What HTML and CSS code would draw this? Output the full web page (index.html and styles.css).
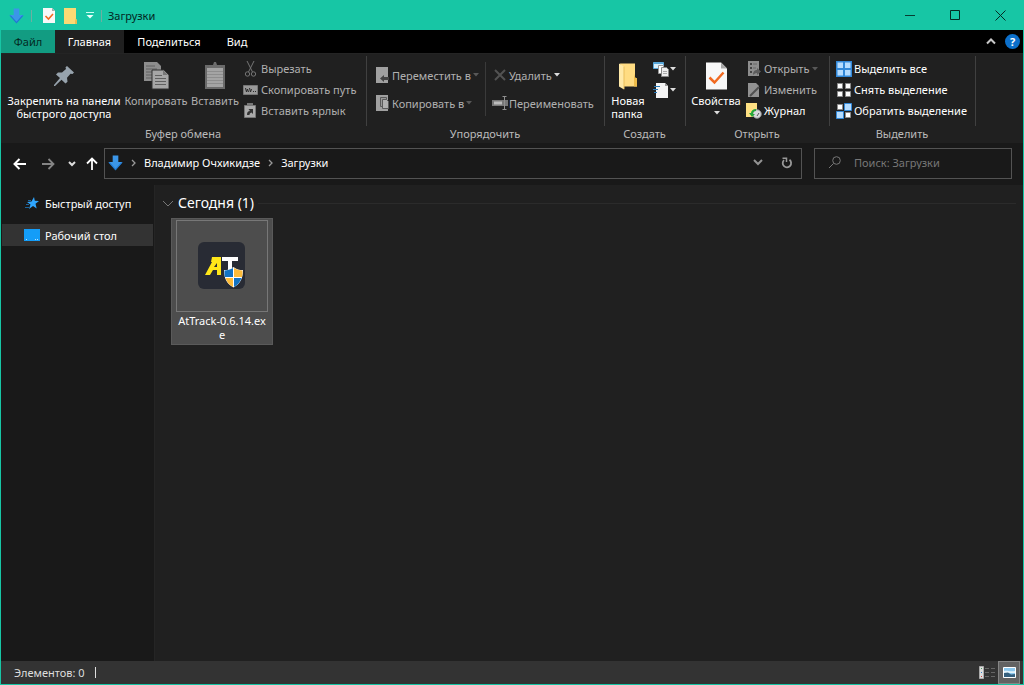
FILE: index.html
```html
<!DOCTYPE html>
<html lang="ru">
<head>
<meta charset="utf-8">
<title>Загрузки</title>
<link rel="stylesheet" href="styles.css">
</head>
<body>
<svg class="defs" width="0" height="0" aria-hidden="true">
  <defs>
    <symbol id="down-arrow" viewBox="0 0 16 16"><path d="M5 0h6v7h4.500L8 15.500.5 7H5z" fill="#3b96e8"/><path d="M.5 7.500L8 16l7.500-8.500h-1.500L8 14 2 7.500z" fill="#1f78d0"/></symbol>
    <symbol id="caret" viewBox="0 0 6 4"><path d="M0 0h6L3 3.500z" fill="currentColor"/></symbol>
    <symbol id="check-page" viewBox="0 0 21 27"><path d="M0 0h15l6 6v21H0z" fill="#f8f8f8"/><path d="M15 0v6h6z" fill="#a9a9a9"/><path d="M3.500 15l5 5 9-10" fill="none" stroke="#f26a21" stroke-width="2.500"/></symbol>
    <symbol id="folder" viewBox="0 0 18 27"><path d="M1 1h15v14l2 1v8H5z" fill="#ffdc82"/><path d="M16 11v4l2 1v8h-3v-9z" fill="#eebc4a"/><path d="M0 1l5 3v23l-5-3z" fill="#ffe9a8"/><path d="M5 4v23" stroke="#e9be5c"/></symbol>
  </defs>
</svg>
<div class="window">
  <header class="titlebar">
    <svg class="qa-arrow" width="15" height="16"><use href="#down-arrow"/></svg>
    <span class="qa-sep"></span>
    <button class="qa-btn" aria-label="Свойства"><svg width="12" height="15" viewBox="0 0 12 15"><path d="M0 0h9l3 3v12H0z" fill="#f8f8f8"/><path d="M9 0v3h3z" fill="#a9a9a9"/><path d="M2.500 8l3 3L10 6" fill="none" stroke="#f26a21" stroke-width="1.600"/></svg></button>
    <button class="qa-btn" aria-label="Новая папка"><svg width="13" height="16" viewBox="0 0 13 16"><path d="M0 0h12v11l1 1v4H0z" fill="#fbda74"/><path d="M12 10v1l1 1v4h-2v-3z" fill="#e9bd52"/></svg></button>
    <button class="qa-btn" aria-label="Настройка панели"><svg width="8" height="7" viewBox="0 0 8 7"><path d="M0 .5h8" stroke="#c9fff2"/><path d="M.5 3h7L4 6.500z" fill="#e8fffa"/></svg></button>
    <span class="qa-sep"></span>
    <h1 class="title">Загрузки</h1>
    <div class="caption">
      <button aria-label="Свернуть"><svg width="11" height="11" viewBox="0 0 11 11"><path d="M0 5.500h10" stroke="#073d32"/></svg></button>
      <button aria-label="Развернуть"><svg width="11" height="11" viewBox="0 0 11 11"><path d="M.5.5h9v9h-9z" fill="none" stroke="#042a22"/></svg></button>
      <button aria-label="Закрыть"><svg width="11" height="11" viewBox="0 0 11 11"><path d="M.5.5l10 10M10.500.5l-10 10" stroke="#042a22"/></svg></button>
    </div>
  </header>

  <nav class="tabs">
    <button class="tab file">Файл</button>
    <button class="tab active">Главная</button>
    <button class="tab">Поделиться</button>
    <button class="tab view">Вид</button>
    <span class="tab-tools">
      <button aria-label="Свернуть ленту"><svg width="10" height="7" viewBox="0 0 10 7"><path d="M1 5.500l4-4 4 4" fill="none" stroke="#c8c8c8" stroke-width="2"/></svg></button>
      <button class="help" aria-label="Справка">?</button>
    </span>
  </nav>

  <section class="ribbon">
    <div class="group clipboard">
      <div class="body">
        <button class="big pin bright"><svg width="22" height="28" viewBox="0 0 22 28"><path d="M14 4l7 6.500-1.500 1.500-2-.3-3.500 4 .5 4-2 1.800-4-3.700L2 24H1v-1l6-7-4-3.500 2-2h4L13 7l-.5-1.700z" fill="#97a3ad"/></svg><span>Закрепить на панели<br>быстрого доступа</span></button>
        <button class="big copy dim"><svg width="25" height="28" viewBox="0 0 25 28"><path d="M0 0h13l4 4v15H0z" fill="#8d8d8d"/><path d="M2 4h9M2 7h11M2 10h6M2 13h6M2 16h6" stroke="#606060"/><path d="M8 8h12l5 5v14H8z" fill="#a6a6a6" stroke="#303030"/><path d="M19 8v5h5z" fill="#777"/><path d="M11 13.500h7M11 16.500h11M11 19.500h11M11 22.500h11" stroke="#606060"/></svg><span>Копировать</span></button>
        <button class="big paste dim"><svg width="20" height="28" viewBox="0 0 20 28"><path d="M0 3h20v24H0z" fill="#6a6a6a"/><path d="M2 6h16v19H2z" fill="#a4a4a4"/><path d="M4 6V3h4l1-3h2l1 3h4v3z" fill="#6d6d6d"/><path d="M2 9.500h16M2 12.500h16M2 15.500h16M2 18.500h16M2 21.500h16" stroke="#8d8d8d"/></svg><span>Вставить</span></button>
        <div class="list">
          <button class="cmd dim"><svg width="16" height="16" viewBox="0 0 16 16" fill="none" stroke="#747474"><path d="M4 0l5.500 11M11 0L5.500 11"/><circle cx="4.500" cy="13" r="2.200"/><circle cx="10.500" cy="13" r="2.200"/></svg><span>Вырезать</span></button>
          <button class="cmd dim"><svg width="16" height="16" viewBox="0 0 16 16"><path d="M.5 3.500h14v9H.5z" fill="#999" stroke="#777"/><path d="M2.500 6l1 4 1-3 1 3M6.500 6l1 4 1-3M10 9.500h1M12 9.500h1" stroke="#292929" fill="none"/></svg><span>Скопировать путь</span></button>
          <button class="cmd dim"><svg width="16" height="16" viewBox="0 0 16 16"><path d="M1.500 2.500h11v12h-11z" fill="#aaa" stroke="#777"/><path d="M4 0h6v3H4z" fill="#777"/><path d="M4 12c0-3 1-4 3-4L5.500 6H10v5L8.500 9.500C7 10 6.500 11 6.500 12z" fill="#333"/></svg><span>Вставить ярлык</span></button>
        </div>
      </div>
      <h2>Буфер обмена</h2>
    </div>

    <div class="group organize">
      <div class="body">
        <div class="list wide">
          <button class="cmd dim"><svg width="16" height="16" viewBox="0 0 16 16"><path d="M1 0h12v16H1z" fill="#a0a0a0"/><path d="M5 11.500L9 8v2h5v3H9v2z" fill="#444"/></svg><span>Переместить в</span><svg class="caret off" width="6" height="4"><use href="#caret"/></svg></button>
          <button class="cmd dim"><svg width="16" height="16" viewBox="0 0 16 16"><path d="M1 0h12v16H1z" fill="#a0a0a0"/><path d="M5.500 2.500h6v9h-6z" fill="#999" stroke="#5a5a5a"/><path d="M7.500 4.500h4l2 2v7h-6z" fill="#b0b0b0" stroke="#5a5a5a"/></svg><span>Копировать в</span><svg class="caret off" width="6" height="4"><use href="#caret"/></svg></button>
        </div>
        <div class="list wide split">
          <button class="cmd dim"><svg width="16" height="16" viewBox="0 0 16 16"><path d="M3 3l10 10M13 3L3 13" stroke="#525252" stroke-width="2"/></svg><span>Удалить</span><svg class="caret" width="6" height="4"><use href="#caret"/></svg></button>
          <button class="cmd dim"><svg width="16" height="16" viewBox="0 0 16 16"><path d="M0 5h16v6H0z" fill="#777"/><path d="M2 6.500h8v3H2z" fill="#bbb"/><path d="M12.500 2v12M10.500 1.500h4M10.500 14.500h4" stroke="#909090"/></svg><span>Переименовать</span></button>
        </div>
      </div>
      <h2>Упорядочить</h2>
    </div>

    <div class="group create">
      <div class="body">
        <button class="big new-folder bright"><svg width="18" height="28" viewBox="0 0 18 27"><use href="#folder"/></svg><span>Новая<br>папка</span></button>
        <div class="list icons">
          <button class="cmd" aria-label="Создать элемент"><svg width="16" height="16" viewBox="0 0 16 16"><path d="M.5 1.500h10v6H.5z" fill="#daf0fc" stroke="#58a6d9"/><path d="M1 2h9v1H1z" fill="#58a6d9"/><path d="M5.500 4.500h5v8h-5z" fill="#fff" stroke="#999"/><path d="M8.500 6.500h5l2 2v7h-7z" fill="#eee" stroke="#888"/><path d="M10 10.500h4M10 12.500h4" stroke="#aaa"/></svg><svg class="caret" width="6" height="4"><use href="#caret"/></svg></button>
          <button class="cmd" aria-label="Простой доступ"><svg width="16" height="16" viewBox="0 0 16 16"><path d="M3 1h9l3 3v12H3z" fill="#f4f4f4"/><path d="M12 1v3h3z" fill="#999"/><path d="M1 4.500h6M0 7.500h5M1 10.500h3" stroke="#2577b5"/></svg><svg class="caret" width="6" height="4"><use href="#caret"/></svg></button>
        </div>
      </div>
      <h2>Создать</h2>
    </div>

    <div class="group open">
      <div class="body">
        <button class="big props bright"><svg width="21" height="28"><use href="#check-page"/></svg><span>Свойства</span><svg class="caret" width="6" height="4"><use href="#caret"/></svg></button>
        <div class="list">
          <button class="cmd dim"><svg width="16" height="16" viewBox="0 0 16 16"><path d="M2 0h11v15H2z" fill="#8d8d8d"/><path d="M4 2h2v2H4zM4 6h2v2H4zM4 10h2v2H4z" fill="#444"/><path d="M7 3h4M7 7h3" stroke="#666"/><path d="M7 14c0-4 2-5 4-5V7l4 3.500-4 3.500v-2c-2 0-3 1-4 2z" fill="#5c5c5c"/></svg><span>Открыть</span><svg class="caret off" width="6" height="4"><use href="#caret"/></svg></button>
          <button class="cmd dim"><svg width="16" height="16" viewBox="0 0 16 16"><path d="M2 1h8l3 3v11H2z" fill="#929292"/><path d="M4 14L13 5" stroke="#505050" stroke-width="2"/></svg><span>Изменить</span></button>
          <button class="cmd bright"><svg width="16" height="16" viewBox="0 0 16 16"><path d="M0 0h11v14H0z" fill="#ffe083"/><circle cx="11" cy="11" r="4.300" fill="#d8dadd" stroke="#888"/><path d="M11 13l2-3" stroke="#555" fill="none"/><path d="M3 10h2c0-2 2-4 5-4v2c-2 0-3 1-3 3h2l-3 3z" fill="#25a83a"/></svg><span>Журнал</span></button>
        </div>
      </div>
      <h2>Открыть</h2>
    </div>

    <div class="group select">
      <div class="body">
        <div class="list">
          <button class="cmd bright"><svg width="16" height="16" viewBox="0 0 16 16"><path d="M0 0h16v16H0z" fill="#3288d8"/><path d="M1.500 1.500h5.500v5.500H1.500zM9 1.500h5.500v5.500H9zM1.500 9h5.500v5.500H1.500zM9 9h5.500v5.500H9z" fill="#b5dcff"/></svg><span>Выделить все</span></button>
          <button class="cmd bright"><svg width="16" height="16" viewBox="0 0 16 16"><path d="M1.500 1.500h5v5h-5zM9.500 1.500h5v5h-5zM1.500 9.500h5v5h-5zM9.500 9.500h5v5h-5z" fill="#fff" stroke="#8c8c8c"/></svg><span>Снять выделение</span></button>
          <button class="cmd bright"><svg width="16" height="16" viewBox="0 0 16 16"><path d="M1.500 1.500h5v5h-5zM9.500 9.500h5v5h-5z" fill="#fff" stroke="#8c8c8c"/><path d="M8.500.5h7v7h-7zM.5 8.500h7v7h-7z" fill="#b5dcff" stroke="#3288d8"/></svg><span>Обратить выделение</span></button>
        </div>
      </div>
      <h2>Выделить</h2>
    </div>
  </section>

  <section class="navbar">
    <div class="history">
      <button aria-label="Назад"><svg width="13" height="12" viewBox="0 0 13 12"><path d="M6.500 1L1.500 6l5 5M1.500 6H13" fill="none" stroke="#fff" stroke-width="2"/></svg></button>
      <button aria-label="Вперед"><svg width="13" height="12" viewBox="0 0 13 12"><path d="M6.500 1l5 5-5 5M11.500 6H0" fill="none" stroke="#858585" stroke-width="1.800"/></svg></button>
      <button aria-label="Последние"><svg width="8" height="6" viewBox="0 0 8 6"><path d="M1 1l3 3 3-3" fill="none" stroke="#ddd" stroke-width="2"/></svg></button>
      <button aria-label="Вверх"><svg width="12" height="13" viewBox="0 0 12 13"><path d="M1 6.500l5-5 5 5M6 2v11" fill="none" stroke="#fff" stroke-width="1.800"/></svg></button>
    </div>
    <div class="address">
      <svg width="15" height="16"><use href="#down-arrow"/></svg>
      <svg class="crumb-sep" width="5" height="8" viewBox="0 0 5 8"><path d="M1 1l3 3-3 3" fill="none" stroke="#999" stroke-width="1.300"/></svg>
      <a href="#">Владимир Очхикидзе</a>
      <svg class="crumb-sep" width="5" height="8" viewBox="0 0 5 8"><path d="M1 1l3 3-3 3" fill="none" stroke="#999" stroke-width="1.300"/></svg>
      <a href="#">Загрузки</a>
      <button class="drop" aria-label="Предыдущие расположения"><svg width="10" height="7" viewBox="0 0 10 7"><path d="M1 1l4 4 4-4" fill="none" stroke="#939393" stroke-width="2"/></svg></button>
      <button class="refresh" aria-label="Обновить"><svg width="12" height="12" viewBox="0 0 12 12"><path d="M8.500 2.800a4.200 4.200 0 1 1-5.500.3" fill="none" stroke="#999" stroke-width="1.800"/><path d="M1.500 1.200h4V5" fill="none" stroke="#999" stroke-width="1.500"/></svg></button>
    </div>
    <label class="search">
      <svg width="14" height="13" viewBox="0 0 14 13" fill="none" stroke="#777"><circle cx="8.500" cy="4.500" r="3.800"/><path d="M5.500 7.500L1 12"/></svg>
      <input type="text" placeholder="Поиск: Загрузки" aria-label="Поиск: Загрузки">
    </label>
  </section>

  <div class="content">
    <aside class="sidebar">
      <a href="#" class="side"><svg width="16" height="14" viewBox="0 0 16 14"><path d="M10 1l.8 3.800 4.200.2-3.500 2.700 1.200 4.800-3.700-2.500L5 13l1.500-4.500L3 6l4.500-.5z" fill="#2fa6ff"/><path d="M2 8.500h3M1 11.500h4M4 4.500h3" stroke="#1c659d"/></svg><span>Быстрый доступ</span></a>
      <a href="#" class="side current"><svg width="16" height="12" viewBox="0 0 16 12"><path d="M0 0h16v12H0z" fill="#149df8"/><path d="M2 10.500h1M11 10.500h1M13 10.500h1" stroke="#b6e2ff"/></svg><span>Рабочий стол</span></a>
    </aside>
    <main class="files">
      <h2 class="section"><svg width="12" height="7" viewBox="0 0 12 7"><path d="M1 1l5 5 5-5" fill="none" stroke="#777"/></svg><span>Сегодня (1)</span></h2>
      <button class="file-tile">
        <span class="thumb"><svg width="50" height="50" viewBox="0 0 50 50"><rect x="1" y="1" width="47" height="47" rx="6" fill="#282b34"/><path d="M15 16h9v18h-4v-5h-4l-3 5H8l7-13h-1zm5 6l-3 4h3z" fill="#ffe719" fill-rule="evenodd"/><path d="M25 16h16v4h-6v13h-4V20h-6z" fill="#fff"/><path d="M36.500 26c3 2.500 6 3 9.500 3 0 9-3 14-9.500 17.500C30 43 27 38 27 29c3.500 0 6.500-.5 9.500-3z" fill="#fff"/><path d="M36 27v9h-8c-.5-2-.5-4-.5-6.500 3-.2 6-1 8.500-2.500zM37 37h7.500c-1.300 4-3.800 7-7.500 9z" fill="#1273c4"/><path d="M37 27c2.500 1.500 5 2.300 8.500 2.500 0 2.500 0 4.500-.5 6.500h-8zM36 37v9c-4-2-6.200-5-7.500-9z" fill="#fdbc3a"/></svg></span>
        <span class="file-name">AtTrack-0.6.14.exe</span>
      </button>
    </main>
  </div>

  <footer class="status">
    <span>Элементов: 0</span><span class="status-sep"></span>
    <div class="views">
      <button aria-label="Таблица"><svg width="17" height="13" viewBox="0 0 17 13"><path d="M.5.500h4v12h-4z" fill="#ddd" stroke="#aaa"/><path d="M2 2.500h1" stroke="#4a9a60"/><path d="M2 6.500h1" stroke="#347ac0"/><path d="M2 10.500h1" stroke="#c44"/><path d="M6 2.500h4M12 2.500h4M6 6.500h4M12 6.500h4M6 10.500h4M12 10.500h4" stroke="#666"/></svg></button>
      <button class="selected" aria-label="Крупные значки"><svg width="13" height="11" viewBox="0 0 13 11"><path d="M.5.5h12v10H.5z" fill="#8cc8ee" stroke="#fff"/><path d="M1 4c3-1 6 1 11 0v2H1z" fill="#e2f3fb"/><path d="M1 6l4-.5 3 2 4-.5v3H1z" fill="#35607e"/></svg></button>
    </div>
  </footer>
</div>
</body>
</html>
```
FILE: styles.css
```css
* { box-sizing: border-box; }
html, body { height: 100%; }
body {
  margin: 0;
  font: 11px/13px "Noto Sans", "Open Sans", sans-serif;
  color: #fff;
  background: #191919;
}
.defs { position: absolute; }
button { margin: 0; padding: 0; border: 0; background: none; color: inherit; font: inherit; }
a { color: inherit; text-decoration: none; }
h1, h2 { margin: 0; font: inherit; }
svg { display: block; flex: none; }

.window {
  display: flex;
  flex-direction: column;
  min-height: 100%;
  border: 1px solid #17c6a5;
}

.titlebar {
  display: flex;
  align-items: center;
  height: 29px;
  padding-left: 8px;
  background: #17c6a5;
  color: #04251e;
}
.qa-sep { width: 1px; height: 12px; margin: 0 11px 0 7px; background: #6eafa1; }
.qa-btn { margin-right: 9px; }
.qa-btn + .qa-sep { margin: 0 6px 0 -2px; }
.caption { display: flex; align-self: stretch; margin-left: auto; }
.caption button { display: grid; place-items: center; width: 45px; }

.tabs { display: flex; height: 23px; background: #000; }
.tab { width: 90px; }
.tab.file { width: 54px; background: #129c82; color: #032a22; }
.tab.active { width: 69px; background: #202020; }
.tab.view { width: 46px; }
.tab-tools { display: flex; align-items: center; gap: 9px; margin-left: auto; padding-right: 3px; }
.help { width: 15px; height: 15px; border-radius: 50%; background: #0c6fca; font-weight: bold; }

.ribbon {
  display: flex;
  height: 91px;
  background: #202020;
  border-bottom: 1px solid #191919;
  border-top: 1px solid #242424;
}
.group { display: flex; flex-direction: column; flex: none; white-space: nowrap; }
.clipboard { width: 366px; }
.organize { width: 238px; }
.create { width: 81px; }
.open { width: 144px; }
.select { width: 146px; }
.group h2 { padding-right: 2px; text-align: center; color: #bababa; }
.body { display: flex; height: 70px; margin: 2px 0 1px; border-right: 1px solid #404040; }
.big { display: flex; flex-direction: column; align-items: center; gap: 4px; padding-top: 6px; }
.pin { width: 118px; margin-left: 4px; }
.copy { width: 66px; }
.paste { width: 52px; }
.new-folder { width: 46px; }
.new-folder span { text-align: left; }
.props { width: 60px; }
.dim { color: #b0b0b0; }
.bright { color: #fff; }
.list { display: flex; flex-direction: column; padding: 2px 0 0 2px; }
.cmd { display: flex; align-items: center; gap: 2px; height: 21px; }
.caret { margin-left: 1px; color: #ddd; }
.caret.off { color: #585858; }
.wide { padding: 5px 0 0 8px; }
.wide .cmd { height: 28px; gap: 1px; }
.split { position: relative; margin-left: 6px; padding-left: 7px; }
.split::before { content: ""; position: absolute; left: 0; top: 6px; bottom: 10px; width: 1px; background: #3a3a3a; }
.icons .cmd { gap: 0; }
.open .list { padding-left: 0; }
.select .list { padding-left: 6px; }

.navbar { display: flex; align-items: center; height: 41px; padding: 4px 11px 6px 12px; }
.history { display: flex; align-items: center; width: 91px; gap: 13px; }
.history button:nth-child(2) { margin-left: 3px; }
.history button:nth-child(4) { margin-left: -3px; }
.address {
  display: flex;
  align-items: center;
  flex: 1;
  align-self: stretch;
  padding: 0 0 2px 3px;
  border: 1px solid #535353;
}
.crumb-sep { margin: 0 8px; }
.drop { display: grid; place-items: center; width: 28px; margin-left: auto; }
.refresh { display: grid; place-items: center; width: 29px; align-self: stretch; }
.search {
  display: flex;
  align-items: center;
  gap: 12px;
  width: 198px;
  margin-left: 12px;
  align-self: stretch;
  padding: 0 0 2px 13px;
  border: 1px solid #535353;
}
.search input { flex: 1; min-width: 0; padding: 0; border: 0; outline: 0; background: none; color: #fff; font: inherit; }
.search input::placeholder { color: #777; opacity: 1; }

.content { display: flex; flex: 1; }
.sidebar { width: 153px; padding-top: 7px; }
.side { display: flex; align-items: center; gap: 5px; height: 22px; margin: 0 1px 10px; padding-left: 22px; }
.side.current { background: #333; }
.files { flex: 1; padding: 8px 7px 0 7px; background: #202020; border-left: 1px solid #252525; }
.section { display: flex; align-items: center; gap: 4px; font-size: 14px; line-height: 20px; }
.section::after { content: ""; flex: 1; height: 1px; background: #2b2b2b; }
.file-tile {
  display: flex;
  flex-direction: column;
  align-items: center;
  width: 102px;
  height: 127px;
  margin: 5px 0 0 9px;
  padding-top: 1px;
  background: #4d4d4d;
  border: 1px solid #5a5a5a;
}
.thumb { display: grid; place-items: center; width: 92px; height: 92px; border: 1px solid #777; }
.file-name { width: 92px; padding: 2px; line-height: 14px; word-break: break-all; }

.status { display: flex; align-items: center; height: 23px; padding-left: 13px; background: #333; color: #ddd; }
.status-sep { width: 1px; height: 11px; margin-left: 10px; background: #ddd; }
.views { display: flex; align-self: stretch; gap: 2px; margin-left: auto; padding-right: 3px; }
.views button { display: grid; place-items: center; width: 17px; }
.views .selected { width: 22px; background: #626262; border: 1px solid #858585; }
```
